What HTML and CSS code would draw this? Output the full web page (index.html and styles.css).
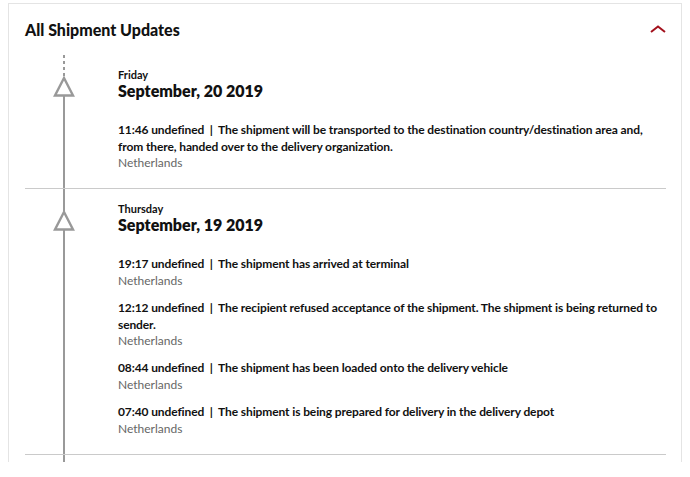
FILE: index.html
```html
<!DOCTYPE html>
<html lang="en">
<head>
    <meta charset="UTF-8">
    <meta name="viewport" content="width=device-width, initial-scale=1.0">
    <title>Shipment Updates</title>
    <link rel="stylesheet" href="styles.css">
</head>
<body>
    <div class="card">
        <div class="header">
            <h2 class="title">All Shipment Updates</h2>
            <button class="toggle" aria-label="Collapse">
                <svg width="16" height="8" viewBox="0 0 16 8"><polyline points="1,7 8,1.5 15,7" fill="none" stroke="#a3101c" stroke-width="2"/></svg>
            </button>
        </div>

        <div class="day">
            <div class="rail">
                <span class="seg seg-top first"></span>
                <svg class="marker" width="22" height="21" viewBox="0 0 22 21"><polygon points="11,2 2,19.5 20,19.5" fill="#fff" stroke="#999" stroke-width="2.4"/></svg>
                <span class="seg seg-fill"></span>
            </div>
            <div class="content">
                <p class="weekday">Friday</p>
                <p class="date">September, 20 2019</p>
                <ul class="events">
                    <li>
                        <p class="event">11:46 undefined &nbsp;|&nbsp; The shipment will be transported to the destination country/destination area and, from there, handed over to the delivery organization.</p>
                        <p class="place">Netherlands</p>
                    </li>
                </ul>
            </div>
        </div>

        <div class="day">
            <div class="rail">
                <span class="seg seg-top"></span>
                <svg class="marker" width="22" height="21" viewBox="0 0 22 21"><polygon points="11,2 2,19.5 20,19.5" fill="#fff" stroke="#999" stroke-width="2.4"/></svg>
                <span class="seg seg-fill"></span>
            </div>
            <div class="content">
                <p class="weekday">Thursday</p>
                <p class="date">September, 19 2019</p>
                <ul class="events">
                    <li>
                        <p class="event">19:17 undefined &nbsp;|&nbsp; The shipment has arrived at terminal</p>
                        <p class="place">Netherlands</p>
                    </li>
                    <li>
                        <p class="event">12:12 undefined &nbsp;|&nbsp; The recipient refused acceptance of the shipment. The shipment is being returned to sender.</p>
                        <p class="place">Netherlands</p>
                    </li>
                    <li>
                        <p class="event">08:44 undefined &nbsp;|&nbsp; The shipment has been loaded onto the delivery vehicle</p>
                        <p class="place">Netherlands</p>
                    </li>
                    <li>
                        <p class="event">07:40 undefined &nbsp;|&nbsp; The shipment is being prepared for delivery in the delivery depot</p>
                        <p class="place">Netherlands</p>
                    </li>
                </ul>
            </div>
        </div>

        <div class="rail tail">
            <span class="seg seg-fill"></span>
        </div>
    </div>
</body>
</html>
```

FILE: styles.css
```css
* {
    margin: 0;
    padding: 0;
    box-sizing: border-box;
}
body {
    background: #fff;
    margin: 3px 8px 0;
    font-family: Lato, "Noto Sans", sans-serif;
    color: #111;
}
.card {
    height: 459px;
    overflow: hidden;
    border: 1px solid #e4e4e4;
    border-bottom: 0;
    padding: 0 15px 0 16px;
    background: #fff;
}
.header {
    display: flex;
    align-items: center;
    justify-content: space-between;
    height: 51px;
}
.title {
    font-size: 16px;
    font-weight: 900;
}
.toggle {
    border: 0;
    background: none;
    width: 16px;
    height: 8px;
    margin-top: -2px;
    cursor: pointer;
    display: flex;
}
.day {
    display: flex;
    border-bottom: 1px solid #cacaca;
}
.rail {
    width: 77px;
    margin-right: 16px;
    display: flex;
    flex-direction: column;
    align-items: center;
    flex-shrink: 0;
}
.seg {
    width: 2px;
    background: #999;
}
.seg-top {
    height: 22px;
}
.seg-top.first {
    background: repeating-linear-gradient(to bottom, #999 0 3px, transparent 3px 6px);
}
.seg-fill {
    flex: 1;
}
.marker {
    display: block;
    margin: -1px 0 -2px;
}
.tail {
    height: 10px;
}
.content {
    flex: 1;
    padding: 13px 0 16.5px;
}
.weekday {
    font-size: 11px;
    font-weight: 700;
    line-height: 13px;
}
.date {
    font-size: 16px;
    font-weight: 800;
    line-height: 20px;
}
.events {
    list-style: none;
    margin-top: 21px;
}
.events li + li {
    margin-top: 10.5px;
}
.event {
    font-size: 12px;
    font-weight: 700;
    line-height: 16.6px;
    letter-spacing: -0.11px;
}
.place {
    font-size: 12px;
    line-height: 16.6px;
    color: #666;
}
```
